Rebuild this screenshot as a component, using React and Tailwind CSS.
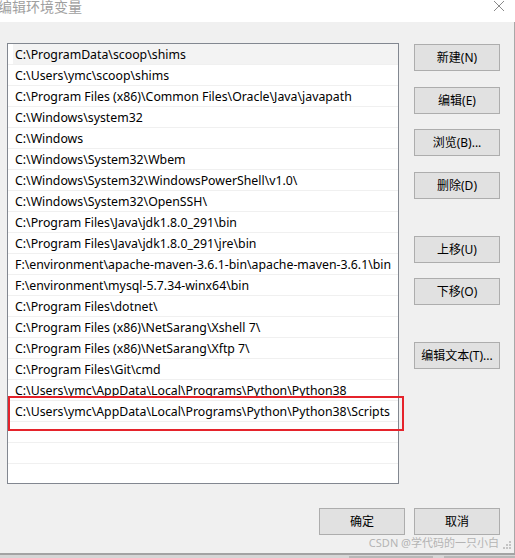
import React from "react";

const paths = [
  "C:\\ProgramData\\scoop\\shims",
  "C:\\Users\\ymc\\scoop\\shims",
  "C:\\Program Files (x86)\\Common Files\\Oracle\\Java\\javapath",
  "C:\\Windows\\system32",
  "C:\\Windows",
  "C:\\Windows\\System32\\Wbem",
  "C:\\Windows\\System32\\WindowsPowerShell\\v1.0\\",
  "C:\\Windows\\System32\\OpenSSH\\",
  "C:\\Program Files\\Java\\jdk1.8.0_291\\bin",
  "C:\\Program Files\\Java\\jdk1.8.0_291\\jre\\bin",
  "F:\\environment\\apache-maven-3.6.1-bin\\apache-maven-3.6.1\\bin",
  "F:\\environment\\mysql-5.7.34-winx64\\bin",
  "C:\\Program Files\\dotnet\\",
  "C:\\Program Files (x86)\\NetSarang\\Xshell 7\\",
  "C:\\Program Files (x86)\\NetSarang\\Xftp 7\\",
  "C:\\Program Files\\Git\\cmd",
  "C:\\Users\\ymc\\AppData\\Local\\Programs\\Python\\Python38",
  "C:\\Users\\ymc\\AppData\\Local\\Programs\\Python\\Python38\\Scripts",
];

const sideButtons = [
  { label: "新建(N)", mt: "mt-[1px]" },
  { label: "编辑(E)", mt: "mt-[16px]" },
  { label: "浏览(B)...", mt: "mt-[15px]" },
  { label: "删除(D)", mt: "mt-[16px]" },
  { label: "上移(U)", mt: "mt-[37px]" },
  { label: "下移(O)", mt: "mt-[15px]" },
  { label: "编辑文本(T)...", mt: "mt-[37px]" },
];

function WinButton({ label, className = "" }) {
  return (
    <button
      className={
        "w-[86px] h-[27px] bg-[#e1e1e1] border border-[#adadad] text-[12px] text-black flex items-center justify-center leading-none " +
        className
      }
    >
      {label}
    </button>
  );
}

export default function App() {
  const font = { fontFamily: '"Noto Sans", "Noto Sans CJK SC", sans-serif' };

  return (
    <div
      className="relative w-[515px] h-[558px] bg-white flex flex-col overflow-hidden"
      style={font}
    >
      {/* title bar */}
      <div className="h-[22px] flex items-center justify-between bg-white">
        <span className="-ml-[2px] -mt-[9px] text-[14px] text-[#a0a0a0]">编辑环境变量</span>
        <svg width="12" height="12" viewBox="0 0 12 12" className="mr-[10px] -mt-[10px]">
          <path d="M1 1 L11 11 M11 1 L1 11" stroke="#8a8a8a" strokeWidth="1" />
        </svg>
      </div>

      {/* body */}
      <div className="flex-1 bg-[#f0f0f0] border-r border-[#a8a8a8] flex flex-col pl-[7px] pt-[21px]">
        <div className="flex">
          <div className="w-[392px] h-[441px] bg-white border border-[#828790] flex flex-col overflow-hidden">
            {paths.map((p, i) => (
              <div
                key={i}
                className="h-[21px] shrink-0 border-b border-[#f0f0f0] flex items-stretch"
              >
                {i === 0 ? (
                  <div className="flex-1 ml-[5px] pl-[2px] pt-[3px] bg-[#f3f3f3] flex items-center text-[12.3px] text-black whitespace-nowrap">
                    {p}
                  </div>
                ) : (
                  <div className="flex-1 pl-[7px] pt-[3px] flex items-center text-[12.3px] text-black whitespace-nowrap">
                    {p}
                  </div>
                )}
              </div>
            ))}
            <div className="h-[21px] shrink-0 border-b border-[#f0f0f0]" />
            <div className="h-[21px] shrink-0 border-b border-[#f0f0f0]" />
          </div>

          <div className="ml-[15px] flex flex-col">
            {sideButtons.map((b) => (
              <WinButton key={b.label} label={b.label} className={b.mt} />
            ))}
          </div>
        </div>

        <div className="flex justify-end gap-[9px] mt-[24px] pr-[14px]">
          <WinButton label="确定" />
          <WinButton label="取消" />
        </div>
      </div>

      {/* window bottom edge */}
      <div className="h-[5px] bg-[#d6d6d6] border-t-2 border-[#a3a3a3] flex">
        <div className="ml-[349px] w-[84px] h-[2px] mt-[1px] bg-[#b8b8b8]" />
        <div className="ml-[11px] w-[71px] h-[2px] mt-[1px] bg-[#b8b8b8]" />
      </div>

      {/* highlight box */}
      <div className="absolute left-[8px] top-[396px] w-[396px] h-[35px] border-2 border-[#e5232b]" />

      {/* watermark */}
      <div className="absolute right-[16px] top-[537px] text-[11px] text-[#b4b4b4] whitespace-nowrap leading-none">
        CSDN @学代码的一只小白
      </div>
      <svg width="8" height="8" viewBox="0 0 8 8" className="absolute left-[503px] top-[541px]">
        <rect x="6" y="0" width="2" height="2" fill="#c4c4c4" />
        <rect x="3" y="3" width="2" height="2" fill="#c4c4c4" />
        <rect x="6" y="3" width="2" height="2" fill="#c4c4c4" />
        <rect x="0" y="6" width="2" height="2" fill="#c4c4c4" />
        <rect x="3" y="6" width="2" height="2" fill="#c4c4c4" />
        <rect x="6" y="6" width="2" height="2" fill="#c4c4c4" />
      </svg>
    </div>
  );
}
